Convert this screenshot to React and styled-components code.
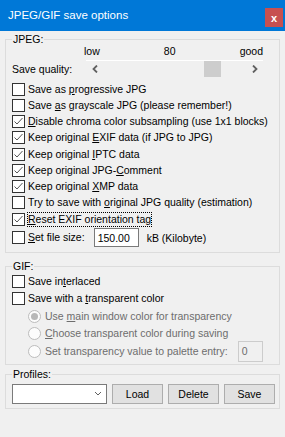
import React from 'react';
import styled, { createGlobalStyle } from 'styled-components';

const GlobalStyle = createGlobalStyle`
  body {
    margin: 0;
    background: #f0f0f0;
  }
`;

const Window = styled.div`
  width: 285px;
  height: 437px;
  background: #f0f0f0;
  display: flex;
  flex-direction: column;
  font-family: "Liberation Sans", Arial, sans-serif;
  font-size: 10.5px;
  color: #000;
  overflow: hidden;
`;

const TitleBar = styled.div`
  height: 31px;
  flex: none;
  background: #0078d7;
  color: #fff;
  display: flex;
  justify-content: space-between;
  padding: 0 2px 0 8px;
  font-size: 11.5px;
`;

const Title = styled.span`
  line-height: 31px;
`;

const CloseButton = styled.div`
  width: 18px;
  height: 19px;
  margin-top: 8px;
  background: #c75050;
  color: #fff;
  font-weight: bold;
  font-size: 11px;
  display: grid;
  place-items: center;
`;

const Body = styled.div`
  display: flex;
  flex-direction: column;
  padding: 0 5px;
`;

const Group = styled.fieldset`
  margin: ${(p) => p.$top}px 0 0;
  padding: 0 4px ${(p) => p.$bottom}px 6px;
  border: 1px solid #dcdcdc;
  min-width: 0;
`;

const Legend = styled.legend`
  padding: 0 1px;
  line-height: 13px;
`;

const ScaleLabels = styled.div`
  display: flex;
  justify-content: space-between;
  margin: 0 12px 3px 72px;
  height: 11px;
  line-height: 11px;
`;

const SliderRow = styled.div`
  display: flex;
  align-items: center;
  height: 17px;
  margin-bottom: 4px;
`;

const SliderLabel = styled.span`
  width: 74px;
  flex: none;
`;

const ScrollBar = styled.div`
  width: 177px;
  height: 17px;
  box-sizing: border-box;
  border-top: 1px solid #fff;
  display: flex;
`;

const ArrowButton = styled.div`
  width: 17px;
  flex: none;
  display: grid;
  place-items: center;
`;

const Track = styled.div`
  flex: 1;
  display: flex;
`;

const Thumb = styled.div`
  width: 17px;
  height: 16px;
  background: #cdcdcd;
`;

const Row = styled.div`
  display: flex;
  align-items: center;
  height: ${(p) => p.$h}px;
  padding-left: ${(p) => p.$indent || 0}px;
  color: ${(p) => (p.$disabled ? '#6d6d6d' : '#000')};
`;

const Box = styled.span`
  width: 13px;
  height: 13px;
  box-sizing: border-box;
  border: 1px solid #333;
  background: #fff;
  margin-right: 3px;
  flex: none;
  display: grid;
  place-items: center;
`;

const Radio = styled.span`
  width: 13px;
  height: 13px;
  box-sizing: border-box;
  border: 1px solid #bcbcbc;
  border-radius: 50%;
  background: #fcfcfc;
  margin-right: 4px;
  flex: none;
  display: grid;
  place-items: center;
  &::after {
    content: '';
    width: 7px;
    height: 7px;
    border-radius: 50%;
    background: ${(p) => (p.$on ? '#b8b8b8' : 'transparent')};
  }
`;

const Label = styled.span`
  white-space: nowrap;
  padding: 1px 1px 2px;
  margin-left: -1px;
  outline: ${(p) => (p.$focus ? '1px dotted #000' : 'none')};
  outline-offset: -1px;
`;

const Field = styled.div`
  width: ${(p) => p.$w}px;
  height: ${(p) => p.$h}px;
  box-sizing: border-box;
  border: 1px solid ${(p) => (p.$disabled ? '#cccccc' : '#7a7a7a')};
  background: ${(p) => (p.$disabled ? '#f0f0f0' : '#fff')};
  color: ${(p) => (p.$disabled ? '#6d6d6d' : '#000')};
  margin-left: ${(p) => p.$ml}px;
  padding-left: 3px;
  display: flex;
  align-items: center;
  justify-content: space-between;
  flex: none;
`;

const Unit = styled.span`
  margin-left: 8px;
`;

const ProfileRow = styled.div`
  display: grid;
  grid-template-columns: 95px 51px 51px 51px;
  column-gap: 5px;
  height: 20px;
  margin-top: 3px;
`;

const Button = styled.div`
  border: 1px solid #adadad;
  background: #e1e1e1;
  display: grid;
  place-items: center;
`;

const Check = () => (
  <svg width="11" height="11" viewBox="0 0 11 11">
    <polyline points="1.5,5.5 4,8 9.5,2" fill="none" stroke="#555" strokeWidth="1" />
  </svg>
);

const Chevron = ({ dir }) => (
  <svg width="6" height="8" viewBox="0 0 6 8">
    <polyline
      points={dir === 'left' ? '5,0.5 1.5,4 5,7.5' : '1,0.5 4.5,4 1,7.5'}
      fill="none"
      stroke="#606060"
      strokeWidth="1.8"
    />
  </svg>
);

const CheckRow = ({ checked, focus, h = 16.25, children }) => (
  <Row $h={h}>
    <Box>{checked && <Check />}</Box>
    <Label $focus={focus}>{children}</Label>
  </Row>
);

const RadioRow = ({ on, children, extra }) => (
  <Row $h={17.5} $indent={16} $disabled>
    <Radio $on={on} />
    <Label>{children}</Label>
    {extra}
  </Row>
);

const quality = 80;

export default function App() {
  const travel = 177 - 34 - 17;
  return (
    <Window>
      <GlobalStyle />
      <TitleBar>
        <Title>JPEG/GIF save options</Title>
        <CloseButton>x</CloseButton>
      </TitleBar>
      <Body>
        <Group $top={2} $bottom={4}>
          <Legend>JPEG:</Legend>
          <ScaleLabels>
            <span>low</span>
            <span>{quality}</span>
            <span>good</span>
          </ScaleLabels>
          <SliderRow>
            <SliderLabel>Save quality:</SliderLabel>
            <ScrollBar>
              <ArrowButton>
                <Chevron dir="left" />
              </ArrowButton>
              <Track>
                <Thumb style={{ marginLeft: Math.round((travel * quality) / 100) }} />
              </Track>
              <ArrowButton>
                <Chevron dir="right" />
              </ArrowButton>
            </ScrollBar>
          </SliderRow>
          <CheckRow>
            Save as <u>p</u>rogressive JPG
          </CheckRow>
          <CheckRow>
            Save <u>a</u>s grayscale JPG (please remember!)
          </CheckRow>
          <CheckRow checked>
            <u>D</u>isable chroma color subsampling (use 1x1 blocks)
          </CheckRow>
          <CheckRow checked>
            Keep original <u>E</u>XIF data (if JPG to JPG)
          </CheckRow>
          <CheckRow checked>
            Keep original <u>I</u>PTC data
          </CheckRow>
          <CheckRow checked>
            Keep original JPG-<u>C</u>omment
          </CheckRow>
          <CheckRow checked>
            Keep original <u>X</u>MP data
          </CheckRow>
          <CheckRow>
            Try to save with <u>o</u>riginal JPG quality (estimation)
          </CheckRow>
          <CheckRow checked focus>
            <u>R</u>eset EXIF orientation tag
          </CheckRow>
          <Row $h={21}>
            <Box />
            <Label>
              <u>S</u>et file size:
            </Label>
            <Field $w={45} $h={19} $ml={8}>
              150.00
            </Field>
            <Unit>kB (Kilobyte)</Unit>
          </Row>
        </Group>

        <Group $top={7} $bottom={4}>
          <Legend>GIF:</Legend>
          <CheckRow h={17}>
            Save in<u>t</u>erlaced
          </CheckRow>
          <CheckRow h={17}>
            Save with a <u>t</u>ransparent color
          </CheckRow>
          <RadioRow on>
            Use <u>m</u>ain window color for transparency
          </RadioRow>
          <RadioRow>
            <u>C</u>hoose transparent color during saving
          </RadioRow>
          <RadioRow extra={<Field $disabled $w={25} $h={21} $ml={9}>0</Field>}>
            Set transparency value to palette entry:
          </RadioRow>
        </Group>

        <Group $top={3} $bottom={4}>
          <Legend>Profiles:</Legend>
          <ProfileRow>
            <Field $w={95} $h={20} $ml={0}>
              <span />
              <svg width="16" height="8" viewBox="0 0 16 8">
                <polyline points="5,2 8,5 11,2" fill="none" stroke="#606060" strokeWidth="1" />
              </svg>
            </Field>
            <Button>Load</Button>
            <Button>Delete</Button>
            <Button>Save</Button>
          </ProfileRow>
        </Group>
      </Body>
    </Window>
  );
}
